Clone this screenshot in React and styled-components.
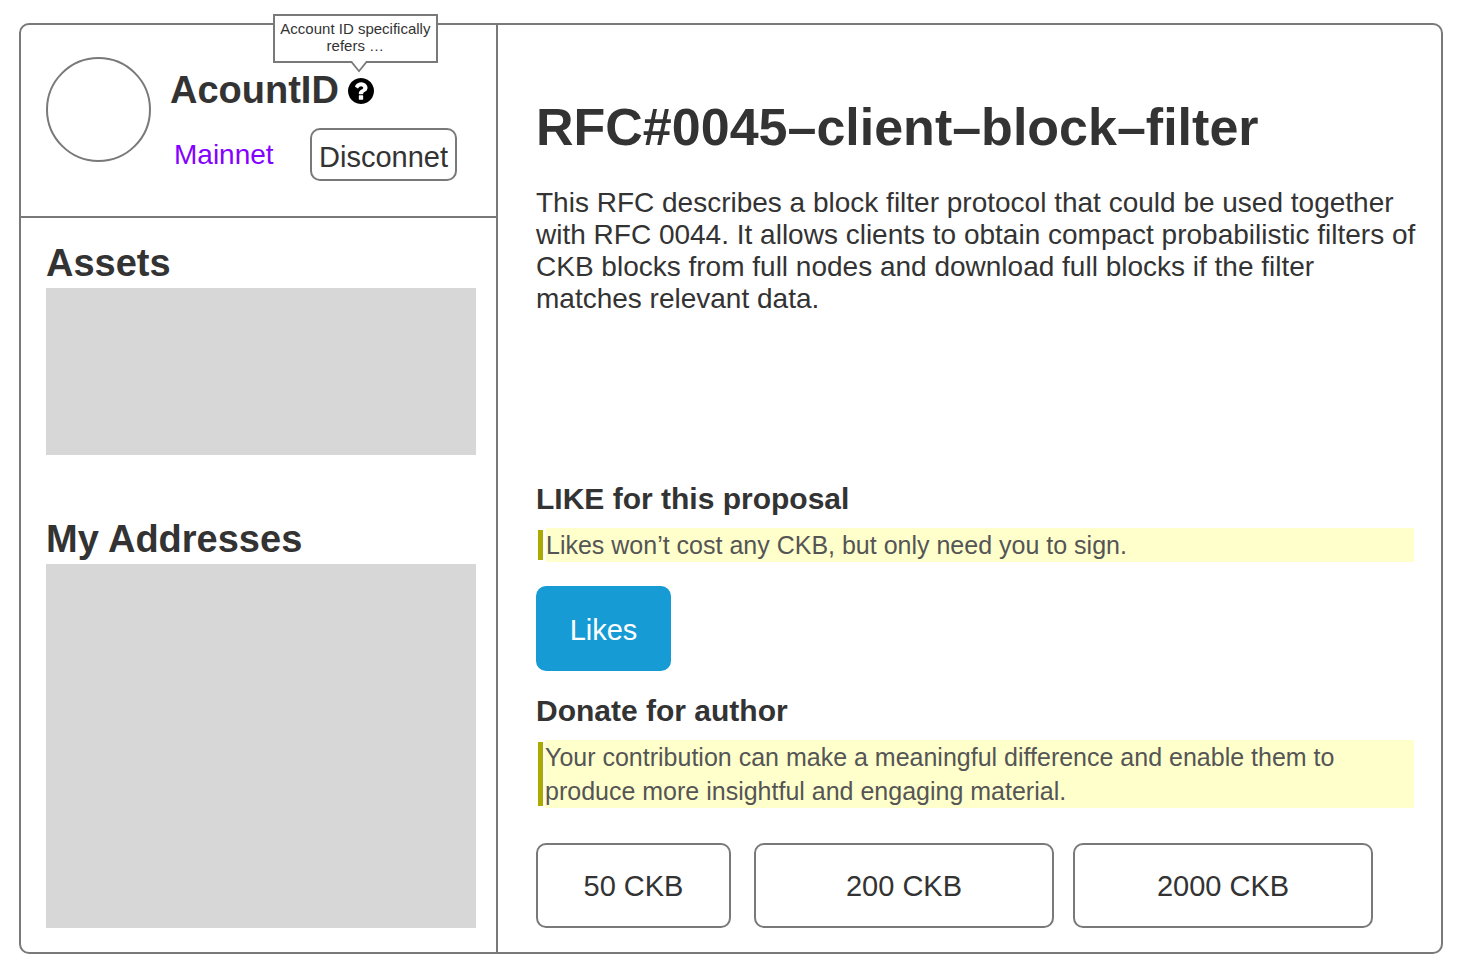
import React from "react";
import styled, { createGlobalStyle } from "styled-components";

const LINE = "#797979";
const INK = "#333333";

const GlobalStyle = createGlobalStyle`
  * { box-sizing: border-box; }
  body {
    margin: 0;
    background: #ffffff;
    color: ${INK};
    font-family: "Liberation Sans", Arial, sans-serif;
  }
  h1, h2, h3, p { margin: 0; }
  button { font-family: inherit; cursor: pointer; }
`;

const Page = styled.div`
  padding: 23px 21px 24px 19px;
`;

const Frame = styled.div`
  display: grid;
  grid-template-columns: 477px minmax(0, 1fr);
  border: 2px solid ${LINE};
  border-radius: 10px;
`;

const Sidebar = styled.aside`
  border-right: 2px solid ${LINE};
`;

const Account = styled.header`
  display: flex;
  gap: 19px;
  height: 193px;
  padding: 32px 39px 0 25px;
  border-bottom: 2px solid ${LINE};
`;

const Avatar = styled.div`
  flex: none;
  width: 105px;
  height: 105px;
  border: 2px solid ${LINE};
  border-radius: 50%;
`;

const AccountBody = styled.div`
  flex: 1;
  display: flex;
  flex-direction: column;
  gap: 15px;
  padding-top: 10px;
`;

const NameRow = styled.div`
  display: flex;
  align-items: center;
  gap: 9px;
`;

const Heading = styled.h2`
  font-size: 38px;
  line-height: 46px;
  font-weight: 700;
`;

const Help = styled.span`
  position: relative;
  display: flex;
  align-items: flex-end;
  width: 26px;
  height: 28px;
`;

const HelpIcon = styled.svg`
  display: block;
  width: 26px;
  height: 26px;
`;

const Tooltip = styled.span`
  position: absolute;
  left: -75px;
  bottom: calc(100% + 13px);
  width: 165px;
  padding: 4px 0 7px;
  border: 2px solid ${LINE};
  background: #ffffff;
  font-size: 15px;
  line-height: 17px;
  text-align: center;
`;

const TooltipTail = styled.svg`
  position: absolute;
  top: 100%;
  left: 75px;
  width: 18px;
  height: 12px;
`;

const NetworkRow = styled.div`
  display: flex;
  align-items: center;
  justify-content: space-between;
  padding-left: 4px;
`;

const Network = styled.span`
  color: #8400ff;
  font-size: 28px;
  line-height: 32px;
`;

const Button = styled.button`
  width: ${(p) => p.$width}px;
  height: ${(p) => (p.$compact ? 53 : 85)}px;
  padding: ${(p) => (p.$compact ? 4 : p.$primary ? 2 : 0)}px 0 0;
  border: 2px solid ${(p) => (p.$primary ? "#169bd5" : LINE)};
  border-radius: 10px;
  background: ${(p) => (p.$primary ? "#169bd5" : "#ffffff")};
  color: ${(p) => (p.$primary ? "#ffffff" : INK)};
  font-size: 29px;
  line-height: 34px;
`;

const Panels = styled.div`
  display: flex;
  flex-direction: column;
  gap: 61px;
  padding: 22px 20px 24px 25px;
`;

const Panel = styled.section`
  display: flex;
  flex-direction: column;
  gap: 2px;
`;

const Placeholder = styled.div`
  height: ${(p) => p.$height}px;
  background: #d7d7d7;
`;

const Main = styled.main`
  display: flex;
  flex-direction: column;
  gap: 30px;
  padding: 72px 21px 24px 38px;
`;

const Title = styled.h1`
  font-size: 52px;
  line-height: 60px;
  font-weight: 700;
`;

const Description = styled.p`
  font-size: 28px;
  line-height: 32px;
`;

const Actions = styled.div`
  display: flex;
  flex-direction: column;
  gap: 20px;
  margin-top: auto;
  padding-right: 6px;
`;

const ActionHeading = styled.h3`
  margin-bottom: 9px;
  font-size: 30px;
  line-height: 40px;
  font-weight: 700;
`;

const Note = styled.div`
  display: flex;
  gap: ${(p) => p.$gap}px;
  margin: 0 0 ${(p) => p.$below}px 2px;
`;

const NoteBar = styled.span`
  flex: none;
  width: 5px;
  margin: 2px 0;
  background: #aaaa00;
`;

const NoteText = styled.p`
  flex: 1;
  background: #ffffcc;
  color: #555555;
  font-size: 25px;
  line-height: 34px;
`;

const Amounts = styled.div`
  display: flex;
  flex-wrap: wrap;
`;

const Amount = styled(Button)`
  margin-right: ${(p) => p.$space || 0}px;
`;

export default function App() {
  return (
    <Page>
      <GlobalStyle />
      <Frame>
        <Sidebar>
          <Account>
            <Avatar />
            <AccountBody>
              <NameRow>
                <Heading>AcountID</Heading>
                <Help>
                  <HelpIcon viewBox="128 128 1536 1536" aria-hidden="true">
                    <path d="M1024 1376v-192q0-14-9-23t-23-9h-192q-14 0-23 9t-9 23v192q0 14 9 23t23 9h192q14 0 23-9t9-23zm256-672q0-88-55.5-163t-138.5-116-170-41q-243 0-371 213-15 24 8 42l132 100q7 6 19 6 16 0 25-12 53-68 86-92 34-24 86-24 48 0 85.5 26t37.5 59q0 38-20 61t-68 45q-63 28-115.5 86.5t-52.5 125.5v36q0 14 9 23t23 9h192q14 0 23-9t9-23q0-19 21.5-49.5t54.5-49.5q32-18 49-28.5t46-35 44.5-48 28-60.5 12.5-81zm384 192q0 209-103 385.5t-279.5 279.5-385.5 103-385.5-103-279.5-279.5-103-385.5 103-385.5 279.5-279.5 385.5-103 385.5 103 279.5 279.5 103 385.5z" />
                  </HelpIcon>
                  <Tooltip role="tooltip">
                    Account ID specifically refers …
                    <TooltipTail viewBox="0 0 18 12" aria-hidden="true">
                      <path d="M1 0H17L9 10Z" fill="#ffffff" />
                      <path
                        d="M0.5 1H1.5L9 10.2L16.5 1H17.5"
                        fill="none"
                        stroke={LINE}
                        strokeWidth="1.8"
                      />
                    </TooltipTail>
                  </Tooltip>
                </Help>
              </NameRow>
              <NetworkRow>
                <Network>Mainnet</Network>
                <Button type="button" $width={147} $compact>
                  Disconnet
                </Button>
              </NetworkRow>
            </AccountBody>
          </Account>
          <Panels>
            <Panel>
              <Heading>Assets</Heading>
              <Placeholder $height={167} />
            </Panel>
            <Panel>
              <Heading>My Addresses</Heading>
              <Placeholder $height={364} />
            </Panel>
          </Panels>
        </Sidebar>
        <Main>
          <Title>RFC#0045–client–block–filter</Title>
          <Description>
            This RFC describes a block filter protocol that could be used
            together with RFC 0044. It allows clients to obtain compact
            probabilistic filters of CKB blocks from full nodes and download
            full blocks if the filter matches relevant data.
          </Description>
          <Actions>
            <section>
              <ActionHeading>LIKE for this proposal</ActionHeading>
              <Note $gap={3} $below={24}>
                <NoteBar />
                <NoteText>
                  Likes won’t cost any CKB, but only need you to sign.
                </NoteText>
              </Note>
              <Button type="button" $width={135} $primary>
                Likes
              </Button>
            </section>
            <section>
              <ActionHeading>Donate for author</ActionHeading>
              <Note $gap={2} $below={35}>
                <NoteBar />
                <NoteText>
                  Your contribution can make a meaningful difference and enable
                  them to produce more insightful and engaging material.
                </NoteText>
              </Note>
              <Amounts>
                <Amount type="button" $width={195} $space={23}>
                  50 CKB
                </Amount>
                <Amount type="button" $width={300} $space={19}>
                  200 CKB
                </Amount>
                <Amount type="button" $width={300}>
                  2000 CKB
                </Amount>
              </Amounts>
            </section>
          </Actions>
        </Main>
      </Frame>
    </Page>
  );
}
